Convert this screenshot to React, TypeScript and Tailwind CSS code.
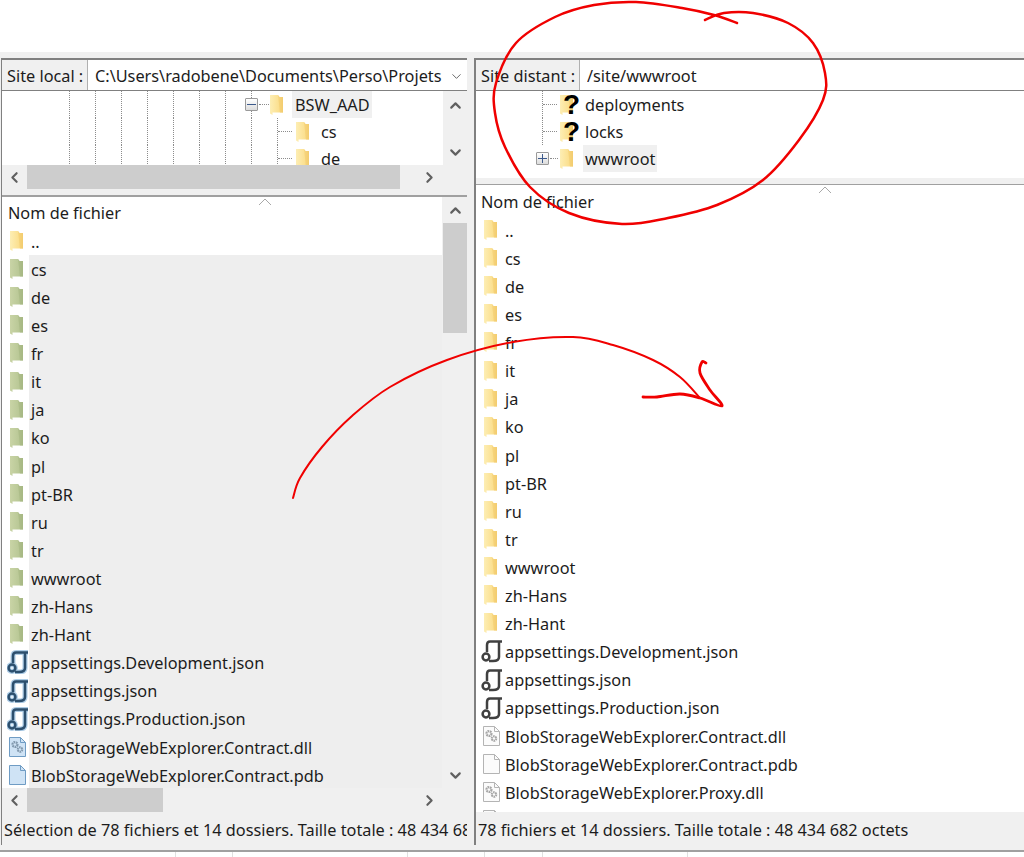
import { ChevronDown, ChevronLeft, ChevronRight, ChevronUp } from 'lucide-react';

const folders = ['cs', 'de', 'es', 'fr', 'it', 'ja', 'ko', 'pl', 'pt-BR', 'ru', 'tr', 'wwwroot', 'zh-Hans', 'zh-Hant'];
const jsons = ['appsettings.Development.json', 'appsettings.json', 'appsettings.Production.json'];

type Kind = 'folder' | 'json' | 'dll' | 'pdb';
type Row = { name: string; kind: Kind };

const baseRows: Row[] = [
  ...folders.map((name): Row => ({ name, kind: 'folder' })),
  ...jsons.map((name): Row => ({ name, kind: 'json' })),
  { name: 'BlobStorageWebExplorer.Contract.dll', kind: 'dll' },
  { name: 'BlobStorageWebExplorer.Contract.pdb', kind: 'pdb' },
];

const STATUS = '78 fichiers et 14 dossiers. Taille totale : 48 434 682 octets';

function FolderIcon({ selected = false }: { selected?: boolean }) {
  const id = selected ? 'folder-sel' : 'folder-norm';
  return (
    <svg width="13" height="20" viewBox="0 0 13 20" className="shrink-0">
      <defs>
        <linearGradient id={id} x1="0" x2="1" y1="0" y2="0">
          <stop offset="0" stopColor={selected ? '#c9d4a6' : '#fdeeb4'} />
          <stop offset="0.7" stopColor={selected ? '#b9c896' : '#fbdf8e'} />
          <stop offset="1" stopColor={selected ? '#a4b582' : '#f1c765'} />
        </linearGradient>
      </defs>
      <path d="M0 0 H8 L9.5 2 H13 V17.5 H2.5 V20 L0 18.5 Z" fill={`url(#${id})`} />
      <path d="M8 0 L9.5 2 H13 V17.5 H10 Z" fill={selected ? '#a8b985' : '#f4cf73'} opacity="0.7" />
    </svg>
  );
}

function UnknownFolder() {
  return (
    <div className="relative shrink-0 w-[13px] h-[20px]">
      <FolderIcon />
      <span className="absolute left-[3px] -top-[8px] text-[28px] leading-[36px] font-bold text-black font-['Liberation_Sans',sans-serif]">?</span>
    </div>
  );
}

function JsonIcon({ selected = false }: { selected?: boolean }) {
  const shapes = (
    <>
      <path d="M21 2.5 H9 C6.5 2.5 6 4 6 6 V13" />
      <path d="M18 3 V18 C18 21 15.500 22 12 22 H8" />
      <circle cx="5" cy="18" r="3.4" />
    </>
  );
  return (
    <svg width="22" height="24" viewBox="0 0 22 24" className="shrink-0 -ml-[3px] -mr-[6px]">
      {selected && (
        <g fill="none" stroke="#8db8dc" strokeWidth="5" opacity="0.7">
          {shapes}
        </g>
      )}
      <g fill="none" stroke={selected ? '#2c4f6e' : '#404040'} strokeWidth="2.5">
        {shapes}
      </g>
    </svg>
  );
}

function PageIcon({ gears = false, selected = false }: { gears?: boolean; selected?: boolean }) {
  const line = selected ? '#6f9cc4' : '#b4b4b4';
  return (
    <svg width="17" height="20" viewBox="0 0 17 20" className="shrink-0 -mr-[2px] -ml-[1px]">
      <path d="M.5 .5 H11.5 L16.5 5.5 V19.5 H.5 Z" fill={selected ? '#cfe3f5' : '#fbfbfb'} stroke={line} />
      <path d="M11.5 .5 V5.500 H16.5" fill="none" stroke={line} />
      {gears && (
        <g fill="none" stroke={selected ? '#8198ad' : '#a5a5a5'}>
          <circle cx="6" cy="7.5" r="2.4" strokeWidth="2.4" strokeDasharray="1.6 .6" />
          <circle cx="11" cy="12.5" r="2.2" strokeWidth="2.2" strokeDasharray="1.5 .6" />
        </g>
      )}
    </svg>
  );
}

function RowIcon({ kind, selected }: { kind: Kind; selected: boolean }) {
  if (kind === 'folder') return <FolderIcon selected={selected} />;
  if (kind === 'json') return <JsonIcon selected={selected} />;
  return <PageIcon gears={kind === 'dll'} selected={selected} />;
}

function FileRow({ row, selected = false }: { row: Row; selected?: boolean }) {
  return (
    <div className="flex items-center h-[28.1px] shrink-0">
      <div className="flex items-center w-[27px] pl-[8px] shrink-0">
        <RowIcon kind={row.kind} selected={selected} />
      </div>
      <span className={`flex-1 flex items-center h-full pl-[2px] pt-[2px] ${selected ? 'bg-[#eeeeee]' : ''}`}>{row.name}</span>
    </div>
  );
}

function HScroll({ thumb }: { thumb: string }) {
  return (
    <div className="flex h-[24px] shrink-0 bg-[#f0f0f0] text-[#606060]">
      <div className="w-[25px] flex items-center justify-center shrink-0">
        <ChevronLeft size={17} strokeWidth={3} />
      </div>
      <div className="flex-1 flex">
        <div className={`${thumb} h-full bg-[#cdcdcd]`} />
      </div>
      <div className="w-[67px] shrink-0 flex items-center justify-start pl-[21px]">
        <ChevronRight size={17} strokeWidth={3} />
      </div>
    </div>
  );
}

function SiteBar({ label, labelWidth, value, combo }: { label: string; labelWidth: string; value: string; combo?: boolean }) {
  return (
    <div className="flex h-[31px] shrink-0 border-b border-[#808080]">
      <div className={`${labelWidth} shrink-0 flex items-center pt-[2px] pl-[5px] bg-[#f0f0f0] border-r border-[#b0b0b0] whitespace-nowrap`}>{label}</div>
      <div className="flex-1 flex items-center pt-[2px] pl-[7px] bg-white whitespace-nowrap overflow-hidden">
        <span className="flex-1 overflow-hidden">{value}</span>
        {combo && <ChevronDown size={15} strokeWidth={1.5} className="mx-[3px] text-[#606060] shrink-0" />}
      </div>
    </div>
  );
}

function Guide({ className = 'w-[26px]', children }: { className?: string; children?: React.ReactNode }) {
  return <div className={`${className} h-full shrink-0 flex items-center border-l border-dotted border-[#8c8c8c]`}>{children}</div>;
}

function Dots({ className }: { className: string }) {
  return <div className={`${className} border-t border-dotted border-[#8c8c8c]`} />;
}

function Expander({ open }: { open: boolean }) {
  return (
    <div className="w-[13px] h-[13px] shrink-0 border border-[#9a9a9a] rounded-[1px] bg-gradient-to-b from-white to-[#dcdcdc] flex items-center justify-center relative">
      <div className="w-[9px] h-px bg-[#3c5a8c]" />
      {!open && <div className="absolute w-px h-[9px] bg-[#3c5a8c]" />}
    </div>
  );
}

function LeftTree() {
  const guides = (n: number) => Array.from({ length: n }, (_, i) => <Guide key={i} />);
  return (
    <div className="flex h-[74px] shrink-0">
      <div className="flex-1 bg-white overflow-hidden pl-[67px]">
        <div className="flex items-center h-[27px]">
          {guides(7)}
          <Guide className="w-[19px]">
            <div className="-ml-[7px]"><Expander open /></div>
            <Dots className="w-[10px] ml-px" />
          </Guide>
          <FolderIcon />
          <span className="ml-[9px] pl-[3px] pr-[2px] pt-[2px] h-full flex items-center bg-[#f0f0f0]">BSW_AAD</span>
        </div>
        {['cs', 'de'].map((name) => (
          <div key={name} className="flex items-center h-[27px]">
            {guides(8)}
            <Guide className="w-[19px]"><Dots className="w-[14px]" /></Guide>
            <FolderIcon />
            <span className="ml-[9px] pl-[3px] pt-[2px]">{name}</span>
          </div>
        ))}
      </div>
      <div className="w-[24px] shrink-0 bg-[#f0f0f0] flex flex-col items-center justify-between pt-[6px] pb-[4px] text-[#606060]">
        <ChevronUp size={17} strokeWidth={3} />
        <ChevronDown size={17} strokeWidth={3} />
      </div>
    </div>
  );
}

function RightTree() {
  return (
    <div className="h-[87px] shrink-0 bg-white pl-[66px]">
      {['deployments', 'locks'].map((name) => (
        <div key={name} className="flex items-center h-[27px]">
          <Guide className="w-[18px]"><Dots className="w-[14px]" /></Guide>
          <UnknownFolder />
          <span className="ml-[10px] pl-[2px] pt-[2px]">{name}</span>
        </div>
      ))}
      <div className="flex items-center h-[27px]">
        <div className="w-[24px] shrink-0 -ml-[6px] flex items-center">
          <Expander open={false} />
          <Dots className="w-[8px] ml-px" />
        </div>
        <FolderIcon />
        <span className="ml-[10px] pl-[2px] pr-[2px] pt-[2px] h-full flex items-center bg-[#f0f0f0]">wwwroot</span>
      </div>
    </div>
  );
}

function LeftList() {
  return (
    <div className="flex flex-1 min-h-0">
      <div className="flex-1 min-w-0 flex flex-col overflow-hidden bg-white">
        <div className="relative h-[30px] shrink-0 flex items-end pb-[2px] pl-[6px]">
          Nom de fichier
          <svg width="14" height="8" viewBox="0 0 14 8" className="absolute top-[1px] left-[256px]">
            <path d="M1 7 L7 1 L13 7" fill="none" stroke="#a8a8a8" />
          </svg>
        </div>
        <FileRow row={{ name: '..', kind: 'folder' }} />
        {baseRows.map((r) => (
          <FileRow key={r.name} row={r} selected />
        ))}
      </div>
      <div className="w-[24px] shrink-0 ml-px bg-[#f0f0f0] flex flex-col text-[#606060]">
        <div className="h-[26px] flex items-center justify-center shrink-0"><ChevronUp size={17} strokeWidth={3} /></div>
        <div className="h-[110px] bg-[#cdcdcd] shrink-0" />
        <div className="flex-1 flex items-end justify-center pb-[4px]"><ChevronDown size={17} strokeWidth={3} /></div>
      </div>
    </div>
  );
}

function RightList() {
  const rows: Row[] = [
    { name: '..', kind: 'folder' },
    ...baseRows,
    { name: 'BlobStorageWebExplorer.Proxy.dll', kind: 'dll' },
    { name: 'BlobStorageWebExplorer.Proxy.pdb', kind: 'pdb' },
  ];
  return (
    <div className="flex-1 min-h-0 flex flex-col overflow-hidden bg-white">
      <div className="relative h-[31px] shrink-0 flex items-end pb-[2px] pl-[5px]">
        Nom de fichier
        <svg width="14" height="8" viewBox="0 0 14 8" className="absolute top-[1px] left-[342px]">
          <path d="M1 7 L7 1 L13 7" fill="none" stroke="#a8a8a8" />
        </svg>
      </div>
      {rows.map((r) => (
        <FileRow key={r.name} row={r} />
      ))}
    </div>
  );
}

function Status({ text }: { text: string }) {
  return <div className="h-[33px] shrink-0 bg-[#f0f0f0] flex items-center pl-[2px] pt-[3px] whitespace-nowrap overflow-hidden">{text}</div>;
}

// catmull-rom through the points, the hand-drawn marks are just sampled from the picture
function smooth(pts: number[][]) {
  let d = `M${pts[0][0]} ${pts[0][1]}`;
  for (let i = 0; i < pts.length - 1; i++) {
    const p0 = pts[i - 1] ?? pts[i];
    const p1 = pts[i];
    const p2 = pts[i + 1];
    const p3 = pts[i + 2] ?? p2;
    const c1 = [p1[0] + (p2[0] - p0[0]) / 6, p1[1] + (p2[1] - p0[1]) / 6];
    const c2 = [p2[0] - (p3[0] - p1[0]) / 6, p2[1] - (p3[1] - p1[1]) / 6];
    d += ` C${c1[0]} ${c1[1]} ${c2[0]} ${c2[1]} ${p2[0]} ${p2[1]}`;
  }
  return d;
}

const circle = [
  [737, 23], [714, 15], [682, 8], [636, 2], [594, 5], [555, 17], [516, 43], [496, 83], [495, 113], [505, 147],
  [530, 187], [569, 213], [622, 224], [668, 218], [717, 205], [763, 180], [799, 140], [823, 100], [825, 73],
  [813, 43], [788, 23], [753, 13], [724, 13], [705, 20],
];
const arrow = [
  [293, 498], [300, 478], [322, 447], [352, 416], [390, 387], [447, 360], [513, 342], [573, 337], [613, 345],
  [653, 360], [680, 377], [700, 398],
];
const head = [
  [643, 397], [657, 397], [680, 394], [700, 398], [722, 406], [710, 390], [700, 373], [702, 362], [706, 363],
];

function Annotations() {
  return (
    <svg width="1024" height="857" viewBox="0 0 1024 857" className="absolute inset-0 pointer-events-none">
      <g fill="none" stroke="#f00000" strokeLinecap="round" strokeLinejoin="round">
        <path d={smooth(circle)} strokeWidth="2.5" />
        <path d={smooth(arrow)} strokeWidth="2" />
        <path d={smooth(head)} strokeWidth="2.8" />
      </g>
    </svg>
  );
}

export default function App() {
  return (
    <div className="relative w-[1024px] h-[857px] bg-white overflow-hidden flex flex-col text-[#1c1c1c] text-[16.3px] font-['Noto_Sans',sans-serif]">
      <div className="h-[52px] shrink-0 bg-white" />
      <div className="flex-1 min-h-0 bg-[#f0f0f0] pt-[6px] pb-[5px] flex">
        <div className="ml-px w-[466px] shrink-0 flex flex-col border-l border-t-2 border-[#808080]">
          <SiteBar label="Site local :" labelWidth="w-[86px]" value="C:\Users\radobene\Documents\Perso\Projets" combo />
          <LeftTree />
          <HScroll thumb="w-[373px]" />
          <div className="h-[6px] shrink-0" />
          <div className="flex-1 min-h-0 flex flex-col border-t-2 border-[#a0a0a0]">
            <LeftList />
            <HScroll thumb="w-[136px]" />
            <Status text={`Sélection de ${STATUS}`} />
          </div>
        </div>
        <div className="ml-[7px] flex-1 min-w-0 flex flex-col border-l-2 border-t-2 border-[#808080]">
          <SiteBar label="Site distant :" labelWidth="w-[104px]" value="/site/wwwroot" />
          <RightTree />
          <div className="h-[6px] shrink-0" />
          <div className="flex-1 min-h-0 flex flex-col border-t border-[#a0a0a0]">
            <RightList />
            <Status text={STATUS} />
          </div>
        </div>
      </div>
      <div className="h-[7px] shrink-0 flex border-t-2 border-[#a0a0a0] bg-white">
        <div className="w-[176px] border-r border-[#e0e0e0]" />
        <div className="w-[57px] border-r border-[#e0e0e0]" />
        <div className="w-[175px] border-r border-[#e0e0e0]" />
        <div className="w-[77px] border-r border-[#e0e0e0]" />
        <div className="w-[58px] border-r border-[#e0e0e0]" />
        <div className="w-[145px] border-r border-[#e0e0e0]" />
      </div>
      <Annotations />
    </div>
  );
}
